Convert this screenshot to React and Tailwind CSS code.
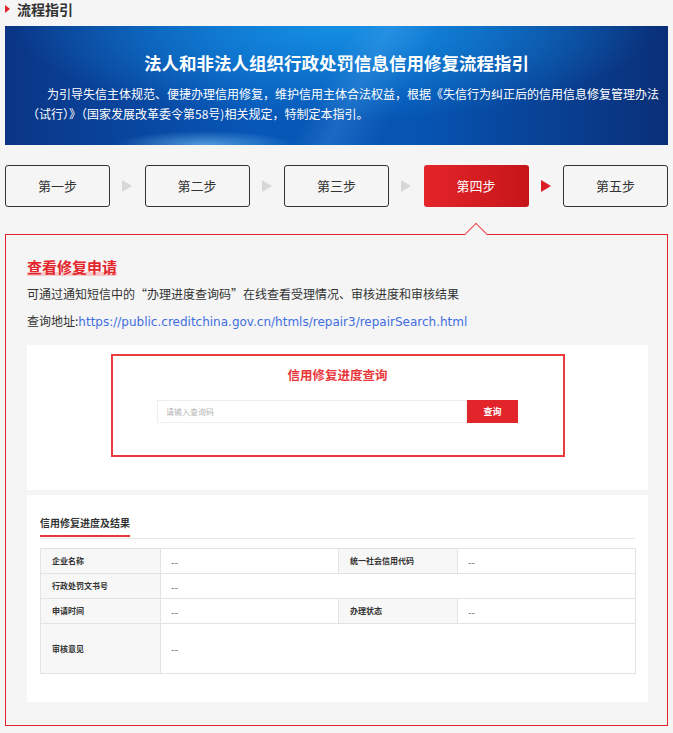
import React from 'react';

const steps = ['第一步', '第二步', '第三步', '第四步', '第五步'];
const ACTIVE = 3;

const Arrow = ({ red }) => (
  <div className="flex-1 flex items-center justify-center">
    <div
      className={`w-0 h-0 border-y-[6px] border-y-transparent border-l-[10px] ${
        red ? 'border-l-[#dc1f26]' : 'border-l-[#d8d8d8]'
      }`}
    />
  </div>
);

const Label = ({ children }) => (
  <td className="bg-[#f7f7f7] border border-[#e3e3e3] pl-[11px] text-[8px] font-bold text-[#333]">
    {children}
  </td>
);

const Value = ({ children = '--', colSpan }) => (
  <td colSpan={colSpan} className="bg-white border border-[#e3e3e3] pl-[10px] text-[10px] text-[#666]">
    {children}
  </td>
);

export default function App() {
  return (
    <div className="min-h-[733px] bg-[#f5f5f5] px-[5px] font-[family-name:'Noto_Sans_CJK_SC','Liberation_Sans',sans-serif] text-[#333]">
      {/* Section title */}
      <div className="h-[26px] flex items-start">
        <div className="flex items-center h-[18px] gap-[7px]">
          <div className="w-0 h-0 border-y-[4px] border-y-transparent border-l-[5px] border-l-[#e0232a]" />
          <span className="text-[14px] font-bold leading-[18px] text-[#333]">流程指引</span>
        </div>
      </div>

      {/* Banner */}
      <div className="h-[119px] pt-[25px] text-white bg-[radial-gradient(ellipse_90px_14px_at_200px_100%,rgba(140,215,255,0.55),transparent),linear-gradient(118deg,transparent_48%,rgba(120,190,255,0.18)_53%,transparent_60%),radial-gradient(ellipse_320px_95px_at_330px_0,#1590e4,transparent),linear-gradient(90deg,#0a3585_0%,#0757b8_38%,#0655b3_62%,#0a2f78_100%)]">
        <h1 className="text-center text-[17.5px] font-bold leading-[24px]">
          法人和非法人组织行政处罚信息信用修复流程指引
        </h1>
        <p className="mt-[9px] pl-[22px] text-[12px] leading-[20px] whitespace-nowrap">
          <span className="pl-[20px]">为引导失信主体规范、便捷办理信用修复，维护信用主体合法权益，根据《失信行为纠正后的信用信息修复管理办法</span>
          <br />
          （试行）》（国家发展改革委令第58号)相关规定，特制定本指引。
        </p>
      </div>

      {/* Steps */}
      <div className="mt-[20px] flex h-[42px]">
        {steps.map((s, i) => (
          <React.Fragment key={s}>
            {i > 0 && <Arrow red={i === ACTIVE + 1} />}
            <div
              className={`w-[105px] shrink-0 rounded-[3px] flex items-center justify-center text-[13px] ${
                i === ACTIVE
                  ? 'bg-[linear-gradient(90deg,#e4252a,#c51519)] text-white'
                  : 'border border-[#333] text-[#333]'
              }`}
            >
              {s}
            </div>
          </React.Fragment>
        ))}
      </div>

      {/* Step content */}
      <div className="relative mt-[27px] border border-[#e3262b] px-[21px] pt-[23px] pb-[23px]">
        <div className="absolute left-[462px] top-[-9px] w-[16px] h-[16px] rotate-45 bg-[#f5f5f5] border-t border-l border-[#e84a4e]" />

        <div className="flex">
          <h2 className="text-[15px] font-bold leading-[18px] text-[#e3262b] bg-[linear-gradient(to_bottom,transparent_14px,#f6c9cb_14px)]">
            查看修复申请
          </h2>
        </div>
        <p className="mt-[8px] text-[12px] leading-[20px] text-[#333]">
          可通过通知短信中的“办理进度查询码”在线查看受理情况、审核进度和审核结果
        </p>
        <p className="mt-[7px] text-[12px] leading-[20px] text-[#333]">
          查询地址:<span className="font-[family-name:'DejaVu_Sans',sans-serif] text-[#3f6ee0]">https://public.creditchina.gov.cn/htmls/repair3/repairSearch.html</span>
        </p>

        {/* Query panel */}
        <div className="mt-[13px] w-[621px] h-[145px] bg-white pt-[9px]">
          <div className="mx-auto w-[454px] h-[103px] border-2 border-[#ea3b3f] flex flex-col items-center">
            <div className="mt-[9px] text-[12.5px] font-bold leading-[20px] text-[#e8383c]">信用修复进度查询</div>
            <div className="mt-[15px] flex h-[23px]">
              <div className="w-[310px] border border-[#eeeeee] flex items-center pl-[8px] text-[8px] text-[#b5b5b5]">
                请输入查询码
              </div>
              <div className="w-[51px] bg-[#e1252b] flex items-center justify-center text-[9px] font-bold text-white">
                查询
              </div>
            </div>
          </div>
        </div>

        {/* Result panel */}
        <div className="mt-[5px] w-[621px] h-[207px] bg-white px-[13px]">
          <div className="pt-[19px] border-b border-[#e6e6e6]">
            <div className="inline-block align-top mb-[-2px] pb-[3px] border-b-2 border-[#e8383b] text-[10px] font-bold leading-[18px] text-[#333]">
              信用修复进度及结果
            </div>
          </div>
          <table className="mt-[9px] w-[595px] table-fixed border-collapse">
            <colgroup>
              <col className="w-[120px]" />
              <col className="w-[178px]" />
              <col className="w-[119px]" />
              <col className="w-[178px]" />
            </colgroup>
            <tbody>
              <tr className="h-[25px]">
                <Label>企业名称</Label>
                <Value />
                <Label>统一社会信用代码</Label>
                <Value />
              </tr>
              <tr className="h-[25px]">
                <Label>行政处罚文书号</Label>
                <Value colSpan={3} />
              </tr>
              <tr className="h-[25px]">
                <Label>申请时间</Label>
                <Value />
                <Label>办理状态</Label>
                <Value />
              </tr>
              <tr className="h-[50px]">
                <Label>审核意见</Label>
                <Value colSpan={3} />
              </tr>
            </tbody>
          </table>
        </div>
      </div>
    </div>
  );
}
